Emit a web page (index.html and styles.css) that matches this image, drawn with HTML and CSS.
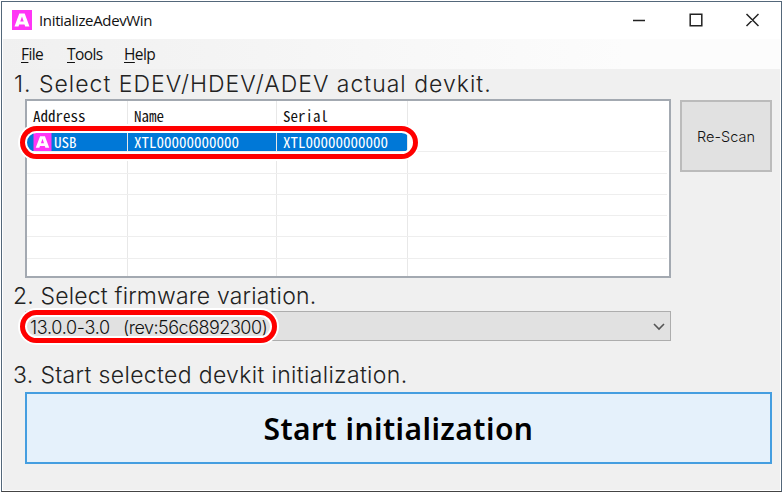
FILE: index.html
```html
<!DOCTYPE html>
<html lang="en">
<head>
<meta charset="utf-8">
<title>InitializeAdevWin</title>
<link rel="stylesheet" href="styles.css">
</head>
<body>
<div class="window">
  <header class="titlebar">
    <svg class="app-icon" viewBox="0 0 20 20"><rect width="20" height="20" fill="#ff35f5"/><path fill="#fff" fill-rule="evenodd" d="M7.3 3.5h5.4L17.5 16.5h-4.3l-.7-2H7.2l-.7 2H2.5zM10 6.5l-1.8 5h3.5z"/></svg>
    <span class="title">InitializeAdevWin</span>
    <svg class="controls" viewBox="0 0 126 16" fill="none" stroke="#222" stroke-width="1.5"><path d="M0 8.5h12M57.2 2.2h11.6v11.6H57.2zM113.5 2l12 12M125.5 2l-12 12"/></svg>
  </header>
  <nav class="menu">
    <span class="item file"><u>F</u>ile</span>
    <span class="item tools"><u>T</u>ools</span>
    <span class="item help"><u>H</u>elp</span>
  </nav>
  <main>
    <h2 class="step one"><span>1. Select EDEV/HDEV/ADEV actual devkit.</span></h2>
    <div class="devices">
      <div class="list">
        <div class="row head"><span>Address</span><span>Name</span><span>Serial</span><span></span></div>
        <div class="row selected">
          <span><svg class="row-icon" viewBox="0 0 20 20"><rect width="20" height="20" fill="#ff35f5"/><path fill="#fff" fill-rule="evenodd" d="M7.3 3.5h5.4L17.5 16.5h-4.3l-.7-2H7.2l-.7 2H2.5zM10 6.5l-1.8 5h3.5z"/></svg>USB</span><span>XTL00000000000</span><span>XTL00000000000</span><span></span>
        </div>
        <div class="row"><span></span><span></span><span></span><span></span></div>
        <div class="row"><span></span><span></span><span></span><span></span></div>
        <div class="row"><span></span><span></span><span></span><span></span></div>
        <div class="row"><span></span><span></span><span></span><span></span></div>
        <div class="row"><span></span><span></span><span></span><span></span></div>
        <div class="row last"><span></span><span></span><span></span><span></span></div>
        <i class="mark mark-row"></i>
      </div>
      <button class="rescan"><span>Re-Scan</span></button>
    </div>
    <h2 class="step two"><span>2. Select firmware variation.</span></h2>
    <div class="combo">
      <span class="version">13.0.0-3.0</span><span class="rev">(rev:56c6892300)</span>
      <svg class="chevron" viewBox="0 0 12 8" fill="none" stroke="#555" stroke-width="1.6"><path d="M1 1l5 5 5-5"/></svg>
      <i class="mark mark-combo"></i>
    </div>
    <h2 class="step three"><span>3. Start selected devkit initialization.</span></h2>
    <button class="start"><span>Start initialization</span></button>
  </main>
</div>
</body>
</html>
```
FILE: styles.css
```css
* { box-sizing: border-box; }
body { margin: 0; background: #fff; }
.window {
  width: 781px;
  height: 491px;
  margin: 1px;
  border: 1px solid #53677a;
  border-bottom-color: #444;
  background: #f0f0f0;
  overflow: hidden;
  box-shadow: inset 0 0 0 1px #fff;
  color: #111;
}
.titlebar {
  display: flex;
  align-items: center;
  height: 37px;
  padding: 0 22px 2px 10px;
  background: #fff;
  font: 15px "Open Sans", sans-serif;
}
.app-icon { width: 20px; height: 20px; margin-right: 7px; }
.title { letter-spacing: -0.35px; }
.controls { width: 126px; height: 16px; margin-left: auto; }
.menu {
  display: flex;
  align-items: center;
  height: 30px;
  margin: 0 1px;
  padding-left: 18px;
  background: linear-gradient(90deg, #f0f0f0, #fcfcfc 80%);
  font: 15.5px "Open Sans", sans-serif;
}
.menu u { text-underline-offset: 2px; text-decoration-thickness: 1px; }
.item { letter-spacing: -0.6px; }
.file { width: 46px; }
.tools { width: 57px; }
main { padding: 0 8px 0 11px; }
.step {
  display: flex;
  align-items: center;
  margin: 0;
  font: 300 23px Inter, sans-serif;
  white-space: nowrap;
  color: #222;
}
.one { height: 30px; padding-left: 1px; letter-spacing: 1px; }
.two { height: 33px; padding-top: 3px; letter-spacing: 0.17px; }
.three { height: 51px; padding-top: 16px; letter-spacing: 0.34px; }
.devices { display: flex; margin-left: 12px; gap: 9px; }
.list {
  position: relative;
  width: 646px;
  height: 179px;
  border: 2px solid #a3a9b1;
  background: #fff;
  font: 15px/21px "Noto Sans CJK JP", monospace;
  font-feature-settings: "hwid";
}
.row {
  display: grid;
  grid-template-columns: 101px 149px 131px 1fr;
  height: 21.3px;
  margin: 0 2px 0 0;
  border-bottom: 1px solid #eee;
}
.row span { padding-left: 6px; border-right: 1px solid #e8e8e8; white-space: pre; }
.row span:last-child { border-right: 0; }
.head { height: 30px; line-height: 30px; border-bottom: 0; }
.selected span { display: flex; align-items: center; height: 18px; margin-top: 2px; padding-bottom: 1px; background: #0078d7; color: #fff; line-height: 17px; }
.selected span:last-child { background: #fff; }
.row-icon { width: 19px; height: 18px; margin: 1px 2px 0 0; }
.last { border-bottom: 0; height: 17px; }
.mark {
  position: absolute;
  border: 5px solid #f00;
  border-radius: 17px;
  box-shadow: 0 0 0 2px #fff, inset 0 0 0 2px #fff;
}
.mark-row { left: -7px; top: 25px; width: 398px; height: 33px; }
.mark-combo { left: -6px; top: -2px; width: 257px; height: 33px; }
button { padding: 0; color: #111; }
.rescan {
  width: 92px;
  height: 72px;
  margin-top: 1px;
  border: 2px solid #bbb;
  background: #e1e1e1;
  font: 300 14.5px Inter, sans-serif;
}
.combo {
  position: relative;
  display: flex;
  align-items: center;
  width: 646px;
  height: 30px;
  margin-left: 12px;
  padding: 2px 5px 0 4px;
  border: 1px solid #adadad;
  background: #e1e1e1;
  font: 300 18px Inter, sans-serif;
}
.version { width: 93px; letter-spacing: -0.3px; }
.rev { letter-spacing: -0.5px; }
.chevron { width: 12px; height: 8px; margin-left: auto; }
.start {
  display: block;
  width: 747px;
  height: 72px;
  margin-left: 12px;
  border: 2px solid #459ee0;
  background: #e5f1fb;
  font: 600 30px "Noto Sans", sans-serif;
  letter-spacing: 0.45px;
  color: #000;
}
```
